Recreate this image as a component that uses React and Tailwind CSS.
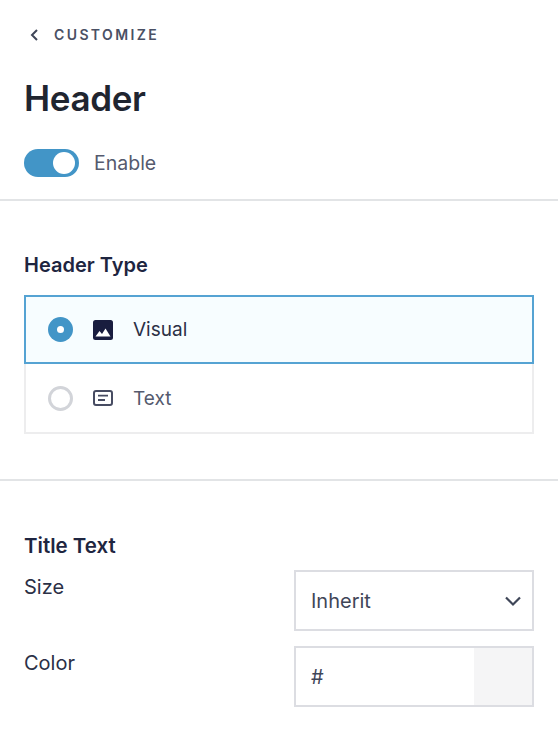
import React from "react";

const font = { fontFamily: "Inter, 'Liberation Sans', sans-serif" };

export default function App() {
  return (
    <div className="w-[558px] h-[737px] overflow-hidden bg-white" style={font}>
      <div className="px-6 pt-[25px] border-b-2 border-[#e2e4e6] h-[201px]">
        <div className="flex items-center h-[20px]">
          <svg width="10" height="14" viewBox="0 0 10 14" fill="none" className="ml-[5px]">
            <path d="M8 2 L3 7 L8 12" stroke="#3f4658" strokeWidth="2" />
          </svg>
          <span className="ml-[15px] text-[14px] leading-[20px] font-semibold tracking-[0.17em] text-[#4a5064]">CUSTOMIZE</span>
        </div>
        <h1 className="mt-[31px] text-[35px] leading-[44px] font-semibold text-[#1f2530] tracking-[-0.01em]">Header</h1>
        <div className="mt-[29px] flex items-center">
          <div className="w-[55px] h-[28px] rounded-full bg-[#4295c7] flex items-center justify-end pr-[4px]">
            <div className="w-[22px] h-[22px] rounded-full bg-white" />
          </div>
          <span className="ml-[15px] text-[19.5px] leading-[28px] text-[#555a6e]">Enable</span>
        </div>
      </div>

      <div className="px-6 pt-[50px] h-[280px] border-b-2 border-[#e2e4e6]">
        <h2 className="text-[20px] leading-[28px] font-semibold text-[#1e2540]">Header Type</h2>
        <div className="mt-[16px] w-[510px]">
          <div className="h-[69px] border-2 border-[#55a3d3] bg-[#f7fdff] flex items-center pl-[22px]">
            <div className="w-[25px] h-[25px] rounded-full bg-[#4295c7] flex items-center justify-center">
              <div className="w-[7px] h-[7px] rounded-full bg-white" />
            </div>
            <svg width="20" height="20" viewBox="0 0 20 20" className="ml-[20px]">
              <rect x="0" y="0" width="20" height="20" rx="2.5" fill="#191d3f" />
              <path d="M2.5 16.5 L6.5 11 L9 14 L12.5 8.5 L17.5 16.5 Z" fill="#fff" />
            </svg>
            <span className="ml-[20px] text-[19px] leading-[28px] text-[#2b3046]">Visual</span>
          </div>
          <div className="h-[70px] border-2 border-t-0 border-[#ededee] flex items-center pl-[22px]">
            <div className="w-[25px] h-[25px] rounded-full border-[3px] border-[#d2d4d9]" />
            <svg width="20" height="16" viewBox="0 0 20 16" fill="none" className="ml-[20px]">
              <rect x="1" y="1" width="18" height="14" rx="2" stroke="#474c62" strokeWidth="2" />
              <path d="M5 5.7 H15 M5 10 H12" stroke="#474c62" strokeWidth="1.8" />
            </svg>
            <span className="ml-[20px] pt-[1px] text-[19px] leading-[28px] text-[#555a6e]">Text</span>
          </div>
        </div>
      </div>

      <div className="px-6 pt-[51px]">
        <h2 className="text-[20.5px] leading-[28px] font-semibold text-[#1e2540]">Title Text</h2>
        <div className="mt-[10px] grid grid-cols-[270px_240px] gap-y-[15px] w-[510px]">
          <div className="text-[20px] leading-[28px] text-[#2b3046] mt-[3px]">Size</div>
          <div className="h-[61px] border-2 border-[#dcdde2] flex items-center justify-between pl-[15px] pr-[10px]">
            <span className="text-[20px] leading-[28px] text-[#3f4658]">Inherit</span>
            <svg width="18" height="12" viewBox="0 0 18 12" fill="none">
              <path d="M2 2.5 L9 9.5 L16 2.5" stroke="#3f4658" strokeWidth="2.2" />
            </svg>
          </div>
          <div className="text-[20px] leading-[28px] text-[#2b3046] mt-[3px]">Color</div>
          <div className="h-[61px] border-2 border-[#dcdde2] flex items-center">
            <span className="pl-[15px] flex-1 text-[20px] leading-[28px] text-[#3f4658]">#</span>
            <div className="w-[58px] h-full bg-[#f5f5f6]" />
          </div>
        </div>
      </div>
    </div>
  );
}
